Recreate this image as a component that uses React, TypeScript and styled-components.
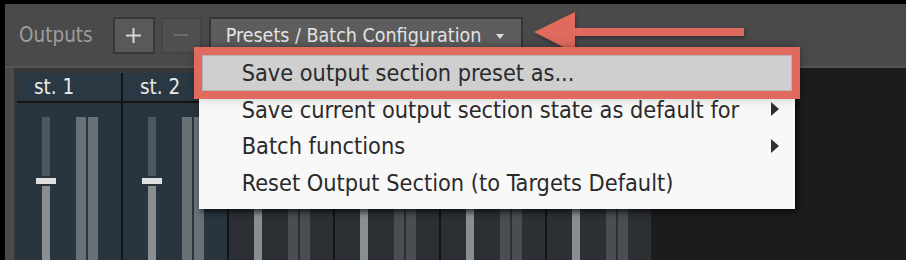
import React from 'react';
import styled, { createGlobalStyle } from 'styled-components';

const FONT = `'DejaVu Sans Condensed', 'DejaVu Sans', sans-serif`;
const RED = '#e06a5e';

const GlobalStyle = createGlobalStyle`
  html, body {
    margin: 0;
    padding: 0;
    background: #000;
  }
  body {
    font-family: ${FONT};
  }
`;

const Frame = styled.div`
  position: relative;
  width: 906px;
  height: 260px;
  box-sizing: border-box;
  padding: 4px 0 0 5px;
  background: #000;
  overflow: hidden;
  display: flex;
  flex-direction: column;
`;

const Toolbar = styled.div`
  height: 64px;
  flex: none;
  box-sizing: border-box;
  display: flex;
  align-items: center;
  padding-left: 14px;
  background: #4a4a4a;
  border-bottom: 2px solid #565656;
`;

const Label = styled.span`
  color: #9d9d9d;
  font-size: 20.5px;
  margin-right: 20px;
`;

const ToolButton = styled.button<{ $disabled?: boolean }>`
  width: ${(p) => (p.$disabled ? 41 : 42)}px;
  height: 37px;
  margin-right: ${(p) => (p.$disabled ? 7 : 6)}px;
  padding: 0;
  box-sizing: border-box;
  display: flex;
  align-items: center;
  justify-content: center;
  background: ${(p) => (p.$disabled ? '#4f4f4f' : '#595959')};
  border: 2px solid ${(p) => (p.$disabled ? '#454545' : '#383838')};
  color: ${(p) => (p.$disabled ? '#6c6c6c' : '#d4d4d4')};
`;

const PresetsWrap = styled.div`
  position: relative;
`;

const PresetsButton = styled.button`
  height: 37px;
  box-sizing: border-box;
  display: flex;
  align-items: center;
  gap: 15px;
  padding: 0 17px 0 15px;
  background: #5d5d5d;
  border: 2px solid #363636;
  color: #e4e4e4;
  font-family: ${FONT};
  font-size: 19.5px;
`;

const Caret = styled.span`
  width: 0;
  height: 0;
  border-left: 4px solid transparent;
  border-right: 4px solid transparent;
  border-top: 5px solid #dcdcdc;
  margin-top: 2px;
`;

const Menu = styled.div`
  position: absolute;
  left: -10px;
  top: 30px;
  width: 596px;
  box-sizing: border-box;
  padding: 8px 3px;
  background: #f8f8f8;
  box-shadow: 2px 3px 6px rgba(0, 0, 0, 0.7);
  z-index: 2;
`;

const MenuItem = styled.div<{ $active?: boolean }>`
  height: 36.5px;
  box-sizing: border-box;
  display: flex;
  align-items: center;
  padding: 0 12px 0 39px;
  border: 1px solid ${(p) => (p.$active ? '#b4b4b4' : 'transparent')};
  background: ${(p) => (p.$active ? '#cfcfcf' : 'transparent')};
  outline: ${(p) => (p.$active ? `8px solid ${RED}` : 'none')};
  box-shadow: ${(p) => (p.$active ? '0 0 12px 6px rgba(0,0,0,0.25)' : 'none')};
  color: #2a2a2a;
  font-size: 23.3px;
  white-space: nowrap;
`;

const SubArrow = styled.span`
  margin-left: auto;
  width: 0;
  height: 0;
  border-top: 7px solid transparent;
  border-bottom: 7px solid transparent;
  border-left: 8px solid #2b3035;
`;

const Arrow = styled.svg`
  position: absolute;
  left: 530px;
  top: 8px;
  filter: drop-shadow(1px 2px 2px rgba(0, 0, 0, 0.35));
`;

const Body = styled.div`
  flex: 1;
  display: flex;
  background: #1c1c1c;
  min-height: 0;
`;

const Gutter = styled.div`
  width: 9px;
  background: #4a4a4a;
`;

const Rack = styled.div`
  display: flex;
  gap: 2px;
  background: #141414;
  border-left: 3px solid #353535;
  border-top: 5px solid #383838;
`;

const Strip = styled.div`
  width: 104px;
  display: grid;
  grid-template-rows: 28px 1fr;
  row-gap: 2px;
`;

const StripHeader = styled.div<{ $selected: boolean }>`
  display: flex;
  align-items: center;
  padding-left: 17px;
  background: ${(p) => (p.$selected ? '#293842' : '#2c3034')};
  color: #ebebeb;
  font-size: 20.5px;
`;

const StripBody = styled.div<{ $selected: boolean }>`
  display: flex;
  gap: 20px;
  padding: 14px 0 0 19px;
  background: ${(p) => (p.$selected ? '#28353e' : '#2c3034')};
`;

const Fader = styled.div`
  width: 20px;
  display: flex;
  flex-direction: column;
  align-items: center;
  gap: 2px;
`;

const TrackTop = styled.div<{ $selected: boolean }>`
  width: 8px;
  height: 59px;
  background: ${(p) => (p.$selected ? '#4c5760' : '#484c50')};
`;

const Knob = styled.div`
  width: 20px;
  height: 6px;
  background: #dedede;
`;

const TrackBottom = styled.div`
  width: 8px;
  flex: 1;
  background: #898e91;
`;

const Meters = styled.div`
  display: flex;
  gap: 2px;
`;

const Meter = styled.div<{ $selected: boolean }>`
  width: 10px;
  background: ${(p) => (p.$selected ? '#687276' : '#4a4e52')};
`;

const strips = [
  { name: 'st. 1', selected: true },
  { name: 'st. 2', selected: true },
  { name: 'st. 3', selected: false },
  { name: 'st. 4', selected: false },
  { name: 'st. 5', selected: false },
  { name: 'st. 6', selected: false },
];

const menuItems = [
  { label: 'Save output section preset as...', active: true },
  { label: 'Save current output section state as default for', sub: true },
  { label: 'Batch functions', sub: true },
  { label: 'Reset Output Section (to Targets Default)' },
];

const PlusIcon = () => (
  <svg width="15" height="15" viewBox="0 0 15 15">
    <rect x="0" y="6.5" width="15" height="2" fill="currentColor" />
    <rect x="6.5" y="0" width="2" height="15" fill="currentColor" />
  </svg>
);

const MinusIcon = () => (
  <svg width="14" height="2" viewBox="0 0 14 2">
    <rect x="0" y="0" width="14" height="2" fill="currentColor" />
  </svg>
);

const App: React.FC = () => {
  return (
    <>
      <GlobalStyle />
      <Frame>
        <Toolbar>
          <Label>Outputs</Label>
          <ToolButton type="button">
            <PlusIcon />
          </ToolButton>
          <ToolButton type="button" $disabled>
            <MinusIcon />
          </ToolButton>
          <PresetsWrap>
            <PresetsButton type="button">
              Presets / Batch Configuration
              <Caret />
            </PresetsButton>
            <Menu>
              {menuItems.map((item) => (
                <MenuItem key={item.label} $active={item.active}>
                  {item.label}
                  {item.sub && <SubArrow />}
                </MenuItem>
              ))}
            </Menu>
          </PresetsWrap>
        </Toolbar>
        <Body>
          <Gutter />
          <Rack>
            {strips.map((s) => (
              <Strip key={s.name}>
                <StripHeader $selected={s.selected}>{s.selected ? s.name : ''}</StripHeader>
                <StripBody $selected={s.selected}>
                  <Fader>
                    <TrackTop $selected={s.selected} />
                    <Knob />
                    <TrackBottom />
                  </Fader>
                  <Meters>
                    <Meter $selected={s.selected} />
                    <Meter $selected={s.selected} />
                  </Meters>
                </StripBody>
              </Strip>
            ))}
          </Rack>
        </Body>
        <Arrow width="220" height="52" viewBox="0 0 220 52">
          <polygon points="4,24 45,4 45,20 214,20 214,28 45,28 45,45" fill={RED} />
        </Arrow>
      </Frame>
    </>
  );
};

export default App;
